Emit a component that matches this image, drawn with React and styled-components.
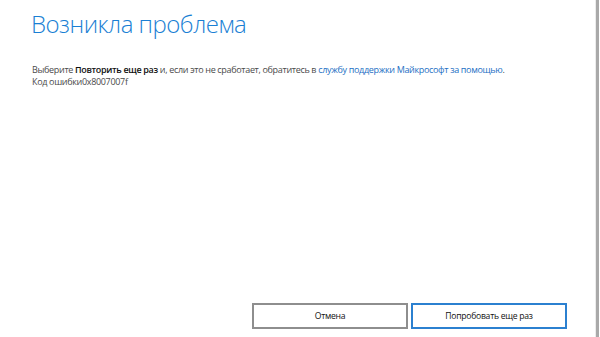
import React from "react";
import styled, { createGlobalStyle } from "styled-components";

const Global = createGlobalStyle`
  html, body { margin: 0; padding: 0; background: #ffffff; }
  body { font-family: "Segoe UI", "Open Sans", "Noto Sans", sans-serif; }
`;

const Window = styled.div`
  box-sizing: border-box;
  width: 600px;
  height: 337px;
  display: flex;
  background: #ffffff;
  overflow: hidden;
`;

const Dialog = styled.div`
  box-sizing: border-box;
  flex: 1;
  display: flex;
  flex-direction: column;
  padding: 8px 28px 8px 32px;
`;

const Edge = styled.div`
  width: 3px;
  border-left: 1px solid #ececec;
  background: #a9a9a9;
  margin-right: 1px;
`;

const Title = styled.h1`
  margin: 0 0 0 -1px;
  font-family: "Open Sans", "Noto Sans", sans-serif;
  font-weight: 300;
  font-size: 24px;
  letter-spacing: -0.5px;
  line-height: 32px;
  color: #1a7fd4;
`;

const Body = styled.div`
  margin-top: 24px;
  font-family: "Open Sans", "Noto Sans", sans-serif;
  font-size: 9px;
  letter-spacing: -0.33px;
  line-height: 12px;
  color: #4a4a4a;
`;

const Strong = styled.b`
  font-weight: 600;
  color: #111111;
`;

const Link = styled.a`
  color: #1d6fc4;
  text-decoration: none;
`;

const Footer = styled.div`
  margin-top: auto;
  display: flex;
  justify-content: flex-end;
  gap: 3px;
`;

const Button = styled.button`
  box-sizing: border-box;
  width: 156px;
  height: 26px;
  background: #ffffff;
  border: 2px solid ${(p) => (p.primary ? "#2b80d0" : "#8e8e8e")};
  font-family: "Open Sans", "Noto Sans", sans-serif;
  font-size: 8.6px;
  letter-spacing: -0.25px;
  color: #111111;
  padding: 0;
`;

export default function App() {
  return (
    <Window>
      <Global />
      <Dialog>
        <Title>Возникла проблема</Title>
        <Body>
          Выберите <Strong>Повторить еще раз</Strong> и, если это не сработает, обратитесь в{" "}
          <Link href="#">службу поддержки Майкрософт за помощью</Link>.
          <br />
          Код ошибки0x8007007f
        </Body>
        <Footer>
          <Button>Отмена</Button>
          <Button primary>Попробовать еще раз</Button>
        </Footer>
      </Dialog>
      <Edge />
    </Window>
  );
}
